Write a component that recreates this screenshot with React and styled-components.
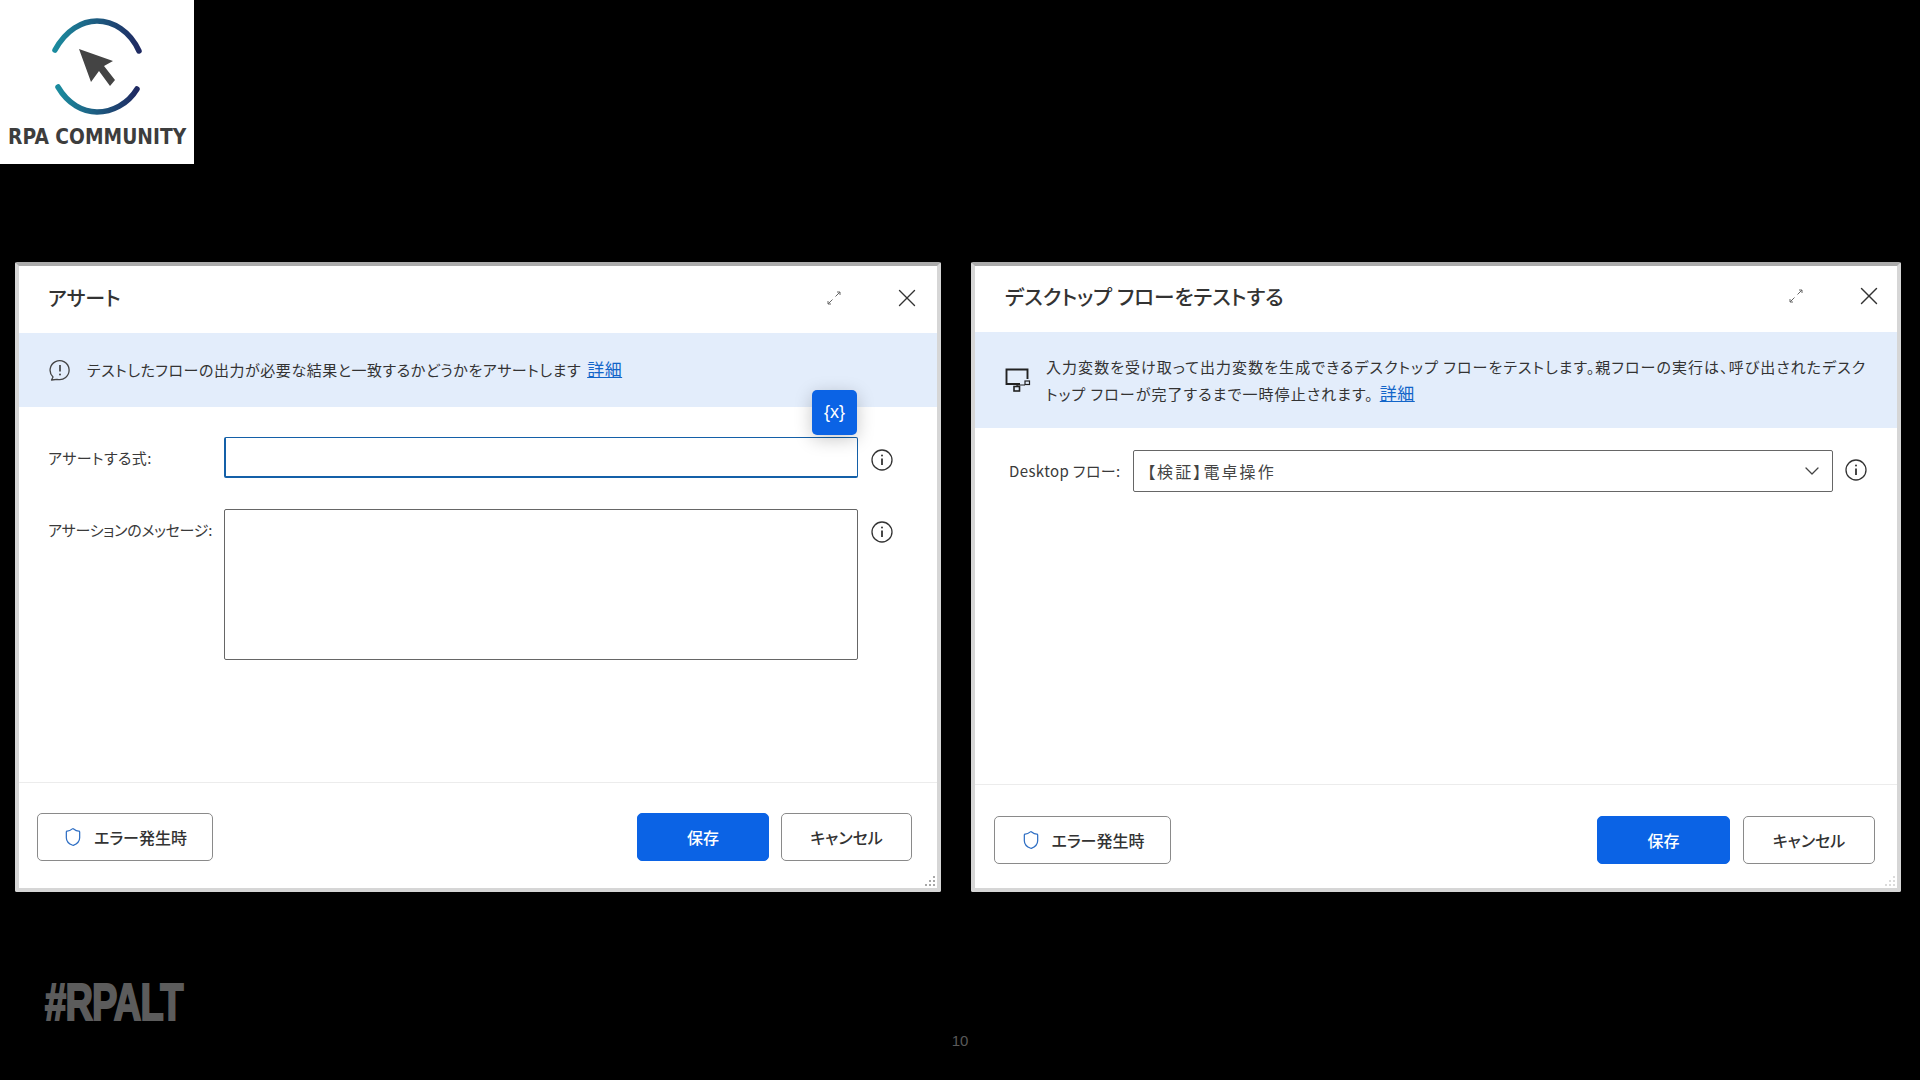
import React from 'react';
import styled, { createGlobalStyle } from 'styled-components';
import { Shield, X, ChevronDown } from 'lucide-react';

const JP = `'Noto Sans CJK JP', 'Liberation Sans', sans-serif`;

const GlobalStyle = createGlobalStyle`
  html, body {
    margin: 0;
    padding: 0;
    background: #000;
  }
  * {
    box-sizing: border-box;
  }
`;

const Slide = styled.div`
  width: 1920px;
  height: 1080px;
  background: #000;
  display: flex;
  flex-direction: column;
  overflow: hidden;
  font-family: ${JP};
`;

const LogoBox = styled.div`
  width: 194px;
  height: 164px;
  background: #fff;
  display: flex;
  flex-direction: column;
  align-items: center;
`;

const LogoText = styled.span`
  font-family: 'DejaVu Sans', sans-serif;
  font-weight: 700;
  font-size: 21px;
  line-height: 26px;
  color: #3d3d3d;
  white-space: nowrap;
  transform: scaleX(0.89);
`;

const DialogRow = styled.div`
  display: flex;
  gap: 30px;
  margin-top: 98px;
  padding-left: 15px;
`;

const Dialog = styled.section`
  position: relative;
  width: ${p => p.$width}px;
  height: 630px;
  background: #fff;
  border: 4px solid #d6d6d6;
  border-top-color: #ababab;
  border-radius: 2px;
  display: flex;
  flex-direction: column;
  color: #333;
`;

const Header = styled.header`
  height: ${p => p.$height}px;
  padding: 0 ${p => p.$right}px ${p => p.$lift}px ${p => p.$left}px;
  display: flex;
  align-items: center;
  justify-content: space-between;
`;

const Title = styled.h2`
  margin: 0;
  font-size: ${p => p.$size}px;
  font-weight: 500;
  color: #333;
  font-feature-settings: 'palt';
  white-space: pre;
`;

const HeaderIcons = styled.div`
  display: flex;
  align-items: center;
  gap: 50px;
  color: #333;
`;

const Banner = styled.div`
  height: ${p => p.$height}px;
  background: #e3edfb;
  padding-left: ${p => p.$left}px;
  display: flex;
  align-items: center;
  gap: ${p => p.$gap}px;
  font-size: 15px;
  line-height: 26px;
  color: #333;
`;

const BannerText = styled.p`
  margin: 0 0 ${p => p.$lift || 0}px;
  white-space: pre;
  letter-spacing: ${p => p.$spacing}px;
  font-feature-settings: 'palt';
`;

const MoreLink = styled.a`
  color: #1265c9;
  font-size: 17px;
  letter-spacing: 0.5px;
  text-decoration: underline;
  margin-left: 6px;
`;

const Body = styled.div`
  flex: 1;
  padding: ${p => p.$top}px 0 0 ${p => p.$left}px;
  display: flex;
  flex-direction: column;
  gap: 31px;
`;

const FieldRow = styled.div`
  display: flex;
  align-items: flex-start;
`;

const FieldLabel = styled.label`
  width: ${p => p.$width}px;
  flex-shrink: 0;
  font-size: 15px;
  line-height: 41px;
  letter-spacing: ${p => p.$spacing}px;
  color: #3a3a3a;
  white-space: nowrap;
  font-feature-settings: 'palt';
`;

const Control = styled.div`
  position: relative;
  width: ${p => p.$width}px;
  flex-shrink: 0;
`;

const TextInput = styled.input`
  display: block;
  width: 100%;
  height: 41px;
  border: 1px solid #1460a8;
  border-width: 1px 1px 2px 2px;
  border-radius: 2px;
  background: #fff;
  outline: none;
`;

const TextArea = styled.textarea`
  display: block;
  width: 100%;
  height: 151px;
  border: 1px solid #666;
  border-radius: 2px;
  background: #fff;
  outline: none;
  resize: none;
`;

const SelectBox = styled.div`
  height: 42px;
  border: 1px solid #666;
  border-radius: 2px;
  padding: 0 8px 0 13px;
  display: flex;
  align-items: center;
  justify-content: space-between;
  font-size: 16px;
  letter-spacing: 2.1px;
  color: #444;
  font-feature-settings: 'palt';
`;

const VariableButton = styled.button`
  position: absolute;
  right: 1px;
  top: -47px;
  width: 45px;
  height: 45px;
  border: 0;
  border-radius: 5px;
  padding: 0;
  background: #0b63e5;
  color: #fff;
  font-family: 'Liberation Sans', sans-serif;
  font-size: 18px;
  box-shadow: 0 4px 18px rgba(0, 0, 0, 0.22);
`;

const InfoSlot = styled.div`
  margin: ${p => p.$top}px 0 0 ${p => p.$left}px;
  display: flex;
  color: #333;
`;

const Footer = styled.footer`
  height: ${p => p.$height}px;
  border-top: 1px solid #ececec;
  padding: ${p => p.$top}px ${p => p.$right}px 0 ${p => p.$left}px;
  display: flex;
  gap: ${p => p.$gap}px;
`;

const ActionButton = styled.button`
  width: ${p => p.$width}px;
  height: 48px;
  border-radius: 5px;
  border: 1px solid ${p => (p.$primary ? '#0b63e5' : '#8a8a8a')};
  background: ${p => (p.$primary ? '#0b63e5' : '#fff')};
  color: ${p => (p.$primary ? '#fff' : '#333')};
  font-family: ${JP};
  font-size: 16px;
  font-weight: 500;
  padding: 0;
  margin-right: ${p => (p.$pushRight ? 'auto' : 0)};
  display: flex;
  align-items: center;
  justify-content: center;
  gap: 11px;
  font-feature-settings: 'palt';
`;

const ResizeGrip = styled.div`
  position: absolute;
  right: 1px;
  bottom: 1px;
  display: flex;
  opacity: ${p => p.$opacity};
`;

const Bottom = styled.div`
  position: relative;
  flex: 1;
  padding: 88px 0 0 45px;
`;

const HashTag = styled.div`
  font-family: 'Liberation Sans', sans-serif;
  font-weight: 700;
  font-size: 52px;
  line-height: 44px;
  color: #5c5c5c;
  -webkit-text-stroke: 2.2px #5c5c5c;
  letter-spacing: -1px;
  transform: scaleX(0.73);
  transform-origin: left center;
`;

const PageNumber = styled.div`
  position: absolute;
  left: 0;
  right: 0;
  top: 139px;
  text-align: center;
  font-family: 'Liberation Sans', sans-serif;
  font-size: 15px;
  line-height: 20px;
  color: #595959;
`;

const LogoMark = () => (
  <svg width="194" height="124" viewBox="0 0 194 124" fill="none">
    <defs>
      <linearGradient id="logoArc" x1="0" x2="1" y1="0" y2="0">
        <stop offset="0" stopColor="#1b8b9e" />
        <stop offset="1" stopColor="#1f2a62" />
      </linearGradient>
    </defs>
    <path d="M55 50 C66 30 82 21 97 21 C113 21 130 31 139 51" stroke="url(#logoArc)" strokeWidth="5.5" strokeLinecap="round" />
    <path d="M58 87 C68 104 83 112 97 112 C112 112 128 104 137 89" stroke="url(#logoArc)" strokeWidth="5.5" strokeLinecap="round" />
    <path d="M79 49 L113 61 L104 66 L115 80 L110 86 L99 71 L91 82 Z" fill="#444" />
  </svg>
);

const ExpandIcon = () => (
  <svg width="16" height="16" viewBox="0 0 16 16" fill="none" stroke="#666" strokeWidth="1">
    <path d="M9.5 6.5 L14 2 M11 2 H14 V5" />
    <path d="M6.5 9.5 L2 14 M2 11 V14 H5" />
  </svg>
);

const InfoIcon = () => (
  <svg width="22" height="22" viewBox="0 0 22 22" fill="none" stroke="#333" strokeWidth="1.3">
    <circle cx="11" cy="11" r="10" />
    <path d="M11 9.5 V16" strokeWidth="1.8" />
    <circle cx="11" cy="6.5" r="1" fill="#333" stroke="none" />
  </svg>
);

const AlertIcon = () => (
  <svg width="22" height="22" viewBox="0 0 22 22" fill="none" stroke="#444" strokeWidth="1.3">
    <path d="M4 18 A9.5 9.5 0 1 1 8 20.3 L2.5 21 Z" strokeLinejoin="round" />
    <path d="M11 6 V12.5" strokeWidth="1.7" />
    <circle cx="11" cy="15.5" r="1" fill="#444" stroke="none" />
  </svg>
);

const DesktopFlowIcon = () => (
  <svg width="26" height="24" viewBox="0 0 26 24" fill="none" stroke="#222" strokeWidth="1.9">
    <path d="M15 16 H1.5 V1.5 H22.5 V11" />
    <rect x="9" y="18.5" width="5.5" height="4.5" strokeWidth="1.6" />
    <rect x="20" y="13" width="4.5" height="3.5" strokeWidth="1.2" />
    <path d="M12 19 V17 H20" strokeWidth="1.1" />
  </svg>
);

const GripIcon = () => (
  <svg width="12" height="12" viewBox="0 0 12 12" fill="#a8a8a8">
    <rect x="9" y="1" width="2" height="2" />
    <rect x="5" y="5" width="2" height="2" />
    <rect x="9" y="5" width="2" height="2" />
    <rect x="1" y="9" width="2" height="2" />
    <rect x="5" y="9" width="2" height="2" />
    <rect x="9" y="9" width="2" height="2" />
  </svg>
);

const DialogFooter = ({ height, top, left, right, gap, widths }) => (
  <Footer $height={height} $top={top} $left={left} $right={right} $gap={gap}>
    <ActionButton $width={widths[0]} $pushRight>
      <Shield size={20} color="#2f6fc4" strokeWidth={1.5} />
      エラー発生時
    </ActionButton>
    <ActionButton $width={widths[1]} $primary>保存</ActionButton>
    <ActionButton $width={widths[2]}>キャンセル</ActionButton>
  </Footer>
);

const App = () => (
  <Slide>
    <GlobalStyle />
    <LogoBox>
      <LogoMark />
      <LogoText>RPA COMMUNITY</LogoText>
    </LogoBox>

    <DialogRow>
      <Dialog $width={926}>
        <Header $height={67} $left={29} $right={15} $lift={4}>
          <Title $size={20}>アサート</Title>
          <HeaderIcons>
            <ExpandIcon />
            <X size={30} strokeWidth={1.1} />
          </HeaderIcons>
        </Header>
        <Banner $height={74} $left={30} $gap={16}>
          <AlertIcon />
          <BannerText $spacing={0.55} $lift={2}>
            テストしたフローの出力が必要な結果と一致するかどうかをアサートします
            <MoreLink>詳細</MoreLink>
          </BannerText>
        </Banner>
        <Body $top={30} $left={29}>
          <FieldRow>
            <FieldLabel $width={176} $spacing={0.4}>アサートする式:</FieldLabel>
            <Control $width={634}>
              <VariableButton>{'{x}'}</VariableButton>
              <TextInput />
            </Control>
            <InfoSlot $top={12} $left={13}><InfoIcon /></InfoSlot>
          </FieldRow>
          <FieldRow>
            <FieldLabel $width={176} $spacing={-0.3}>アサーションのメッセージ:</FieldLabel>
            <Control $width={634}>
              <TextArea />
            </Control>
            <InfoSlot $top={12} $left={13}><InfoIcon /></InfoSlot>
          </FieldRow>
        </Body>
        <DialogFooter height={106} top={30} left={18} right={25} gap={12} widths={[176, 132, 131]} />
        <ResizeGrip $opacity={1}><GripIcon /></ResizeGrip>
      </Dialog>

      <Dialog $width={930}>
        <Header $height={66} $left={30} $right={13} $lift={6}>
          <Title $size={20.6}>デスクトップ フローをテストする</Title>
          <HeaderIcons>
            <ExpandIcon />
            <X size={30} strokeWidth={1.1} />
          </HeaderIcons>
        </Header>
        <Banner $height={96} $left={30} $gap={15}>
          <DesktopFlowIcon />
          <BannerText $spacing={1.05}>
            入力変数を受け取って出力変数を生成できるデスクトップ フローをテストします。親フローの実行は、呼び出されたデスク{'\n'}
            トップ フローが完了するまで一時停止されます。
            <MoreLink>詳細</MoreLink>
          </BannerText>
        </Banner>
        <Body $top={22} $left={34}>
          <FieldRow>
            <FieldLabel $width={124} $spacing={0.4}>Desktop フロー:</FieldLabel>
            <Control $width={700}>
              <SelectBox>
                【検証】電卓操作
                <ChevronDown size={24} strokeWidth={1.3} color="#444" />
              </SelectBox>
            </Control>
            <InfoSlot $top={9} $left={12}><InfoIcon /></InfoSlot>
          </FieldRow>
        </Body>
        <DialogFooter height={104} top={31} left={19} right={22} gap={13} widths={[177, 133, 132]} />
        <ResizeGrip $opacity={0.4}><GripIcon /></ResizeGrip>
      </Dialog>
    </DialogRow>

    <Bottom>
      <HashTag>#RPALT</HashTag>
      <PageNumber>10</PageNumber>
    </Bottom>
  </Slide>
);

export default App;
